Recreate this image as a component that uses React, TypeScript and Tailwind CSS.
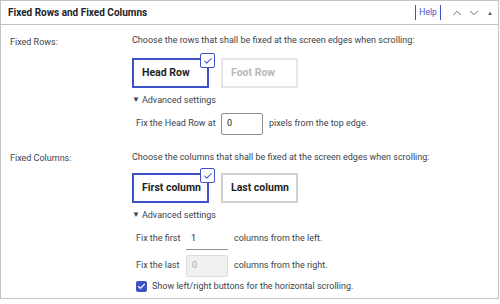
import { Check, ChevronUp, ChevronDown } from "lucide-react";

const font = "font-['Roboto',_'Liberation_Sans',_sans-serif]";

function ChoiceBox({ label, active, disabled }: { label: string; active?: boolean; disabled?: boolean }) {
  return (
    <div
      className={
        "relative w-[77px] h-[30px] flex items-center px-[8px] text-[10.5px] font-bold whitespace-nowrap border-2 " +
        (active
          ? "border-[#3f51c8] text-[#1e1e1e]"
          : disabled
          ? "border-[#e6e6e6] text-[#b8b8b8]"
          : "border-[#d0d0d0] text-[#1e1e1e]")
      }
    >
      {label}
      {active && (
        <span className="absolute -top-[7px] -right-[8px] w-[15px] h-[15px] bg-white border-[1.5px] border-[#3f51c8] rounded-[2px] flex items-center justify-center">
          <Check className="w-[10px] h-[10px] text-[#3f51c8]" strokeWidth={2.5} />
        </span>
      )}
    </div>
  );
}

function Advanced() {
  return (
    <div className="flex items-center gap-[2px] text-[9px] leading-[12px] text-[#3c434a] mt-[6px]">
      <span className="text-[8px]">▼</span>
      <span>Advanced settings</span>
    </div>
  );
}

export default function App() {
  return (
    <div className={"w-[500px] h-[304px] bg-white text-[#3c434a] " + font}>
      <div className="w-[499px] h-[299px] border border-[#c3c4c7]">
        <div className="h-[24px] flex items-center justify-between border-b border-[#c3c4c7] pl-[7px] pr-[5px]">
          <span className="text-[10px] font-bold text-[#1d2327]">Fixed Rows and Fixed Columns</span>
          <div className="flex items-center">
            <span className="h-[15px] w-[26px] flex items-center justify-center border-x border-[#3f51c8] text-[8.5px] text-[#3f51c8]">Help</span>
            <ChevronUp className="w-[14px] h-[14px] text-[#50575e] ml-[9px]" strokeWidth={1.5} />
            <ChevronDown className="w-[14px] h-[14px] text-[#50575e] ml-[3px]" strokeWidth={1.5} />
            <span className="text-[6px] text-[#50575e] ml-[6px]">▲</span>
          </div>
        </div>

        <div className="flex pt-[9px]">
          <div className="w-[131px] pl-[9px] text-[9px] leading-[12px] pt-[2px]">Fixed Rows:</div>
          <div className="flex-1">
            <div className="text-[9px] leading-[12px]">Choose the rows that shall be fixed at the screen edges when scrolling:</div>
            <div className="flex gap-[12px] mt-[12px]">
              <ChoiceBox label="Head Row" active />
              <ChoiceBox label="Foot Row" disabled />
            </div>
            <Advanced />
            <div className="flex items-center text-[9px] ml-[4px] mt-[7px]">
              <span className="w-[85px]">Fix the Head Row at</span>
              <span className="w-[42px] h-[22px] border border-[#8c8f94] rounded-[2px] flex items-center px-[5px] text-[#1e1e1e]">0</span>
              <span className="ml-[6px]">pixels from the top edge.</span>
            </div>
          </div>
        </div>

        <div className="flex pt-[16px]">
          <div className="w-[131px] pl-[9px] text-[9px] leading-[12px] pt-[1px]">Fixed Columns:</div>
          <div className="flex-1">
            <div className="text-[9px] leading-[12px]">Choose the columns that shall be fixed at the screen edges when scrolling:</div>
            <div className="flex gap-[12px] mt-[10px]">
              <ChoiceBox label="First column" active />
              <ChoiceBox label="Last column" />
            </div>
            <Advanced />
            <div className="flex items-center text-[9px] ml-[4px] mt-[7px]">
              <span className="w-[50px]">Fix the first</span>
              <span className="w-[42px] h-[22px] border-b border-[#8c8f94] flex items-center px-[5px] text-[#1e1e1e]">1</span>
              <span className="ml-[6px]">columns from the left.</span>
            </div>
            <div className="flex items-center text-[9px] ml-[4px] mt-[5px]">
              <span className="w-[50px]">Fix the last</span>
              <span className="w-[42px] h-[22px] border border-[#dcdcde] bg-[#f0f0f1] rounded-[2px] flex items-center px-[5px] text-[#a7aaad]">0</span>
              <span className="ml-[6px]">columns from the right.</span>
            </div>
            <div className="flex items-center text-[9px] leading-[12px] ml-[4px] mt-[3px]">
              <span className="w-[11px] h-[11px] bg-[#3f51c8] rounded-[2px] flex items-center justify-center">
                <Check className="w-[9px] h-[9px] text-white" strokeWidth={3} />
              </span>
              <span className="ml-[5px]">Show left/right buttons for the horizontal scrolling.</span>
            </div>
          </div>
        </div>
      </div>
    </div>
  );
}
